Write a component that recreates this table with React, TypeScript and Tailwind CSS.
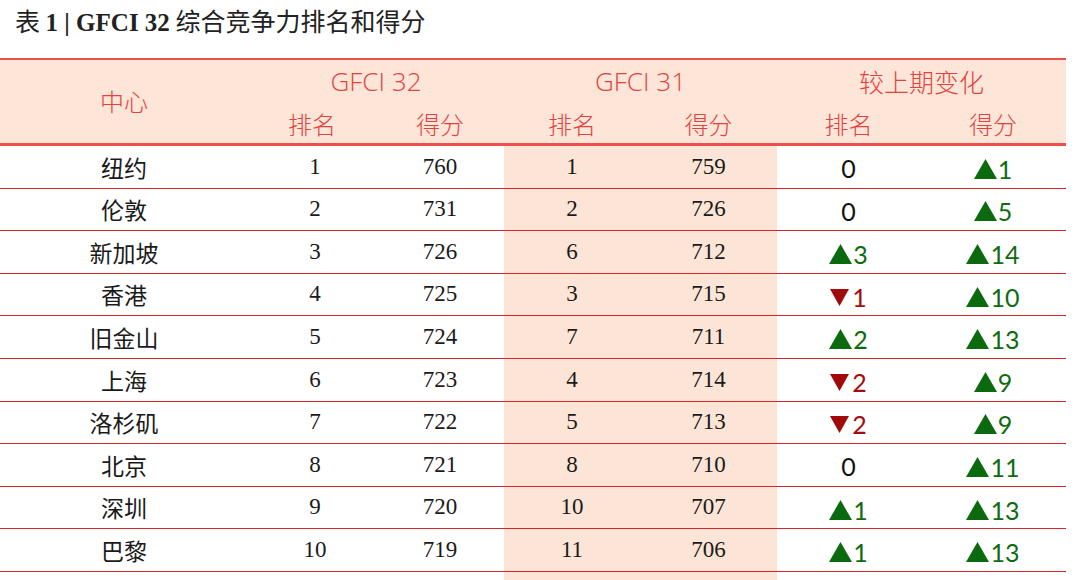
const rows = [
  { city: '纽约', r32: 1, s32: 760, r31: 1, s31: 759, dr: 0, ds: 1 },
  { city: '伦敦', r32: 2, s32: 731, r31: 2, s31: 726, dr: 0, ds: 5 },
  { city: '新加坡', r32: 3, s32: 726, r31: 6, s31: 712, dr: 3, ds: 14 },
  { city: '香港', r32: 4, s32: 725, r31: 3, s31: 715, dr: -1, ds: 10 },
  { city: '旧金山', r32: 5, s32: 724, r31: 7, s31: 711, dr: 2, ds: 13 },
  { city: '上海', r32: 6, s32: 723, r31: 4, s31: 714, dr: -2, ds: 9 },
  { city: '洛杉矶', r32: 7, s32: 722, r31: 5, s31: 713, dr: -2, ds: 9 },
  { city: '北京', r32: 8, s32: 721, r31: 8, s31: 710, dr: 0, ds: 11 },
  { city: '深圳', r32: 9, s32: 720, r31: 10, s31: 707, dr: 1, ds: 13 },
  { city: '巴黎', r32: 10, s32: 719, r31: 11, s31: 706, dr: 1, ds: 13 },
];

const cols = 'grid grid-cols-[248px_128px_128px_136px_137px_143px_146px]';
const cjk = "font-['Noto_Sans_CJK_SC',sans-serif]";
const serif = "font-['Liberation_Serif','Noto_Sans_CJK_SC',serif]";
const head = "font-['Open_Sans','Noto_Sans_CJK_SC',sans-serif] font-light text-[24px] text-[#e5403f]";

function Change({ v }: { v: number }) {
  if (v === 0) return <span className="text-[#111]">0</span>;
  if (v > 0)
    return (
      <span className="flex items-end text-[#0f6b12]">
        <svg width="23" height="20" viewBox="0 0 23 20" className="mb-[4px] mr-[1px]">
          <polygon points="11.5,0 23,20 0,20" fill="#0b6a0e" />
        </svg>
        <span className="leading-[28px]">{v}</span>
      </span>
    );
  return (
    <span className="flex items-start text-[#a40d0d]">
      <svg width="19" height="17" viewBox="0 0 19 17" className="mt-[6px] mr-[3px]">
        <polygon points="0,0 19,0 9.5,17" fill="#a00a0a" />
      </svg>
      <span className="leading-[28px]">{-v}</span>
    </span>
  );
}

export default function App() {
  return (
    <div className="w-[1080px] h-[580px] bg-white overflow-hidden">
      <div className={`h-[40px] pl-[15px] pt-[3px] text-[25px] leading-[34px] text-[#222] ${cjk}`}>
        表 <span className="font-['Liberation_Serif',serif] font-bold">1 | GFCI 32</span> 综合竞争力排名和得分
      </div>

      <div className="w-[1066px] mt-[18px]">
        {/* header */}
        <div className={`${cols} grid-rows-[43px_40px] bg-[#fde6d7] border-t-2 border-b-[3px] border-[#ec4f4d] ${head}`}>
          <div className={`row-span-2 flex items-center justify-center pb-[2px] ${cjk} font-light`}>中心</div>
          <div className="col-span-2 flex items-center justify-center text-[26px]">GFCI 32</div>
          <div className="col-span-2 flex items-center justify-center text-[26px]">GFCI 31</div>
          <div className={`col-span-2 flex items-center justify-center text-[25px] ${cjk} font-light`}>较上期变化</div>
          {['排名', '得分', '排名', '得分', '排名', '得分'].map((t, i) => (
            <div key={i} className={`flex items-start justify-center pt-[4px] ${cjk} font-light leading-[34px]`}>{t}</div>
          ))}
        </div>

        {/* body */}
        {rows.map((r) => (
          <div key={r.city} className={`${cols} h-[42.6px] border-b-[1.5px] border-[#d9262b] text-[23px] text-[#1a1a1a]`}>
            <div className={`flex items-center justify-center ${cjk}`}>{r.city}</div>
            <div className={`flex items-center justify-center pl-[6px] ${serif}`}>{r.r32}</div>
            <div className={`flex items-center justify-center ${serif}`}>{r.s32}</div>
            <div className={`flex items-center justify-center bg-[#fce5d6] ${serif}`}>{r.r31}</div>
            <div className={`flex items-center justify-center bg-[#fce5d6] ${serif}`}>{r.s31}</div>
            <div className="flex items-center justify-center pt-[4px] text-[25px] font-['Lato',sans-serif]"><Change v={r.dr} /></div>
            <div className="flex items-center justify-center pt-[4px] text-[25px] font-['Lato',sans-serif]"><Change v={r.ds} /></div>
          </div>
        ))}
        <div className={`${cols} h-[20px]`}>
          <div />
          <div />
          <div />
          <div className="bg-[#fce5d6]" />
          <div className="bg-[#fce5d6]" />
        </div>
      </div>
    </div>
  );
}
